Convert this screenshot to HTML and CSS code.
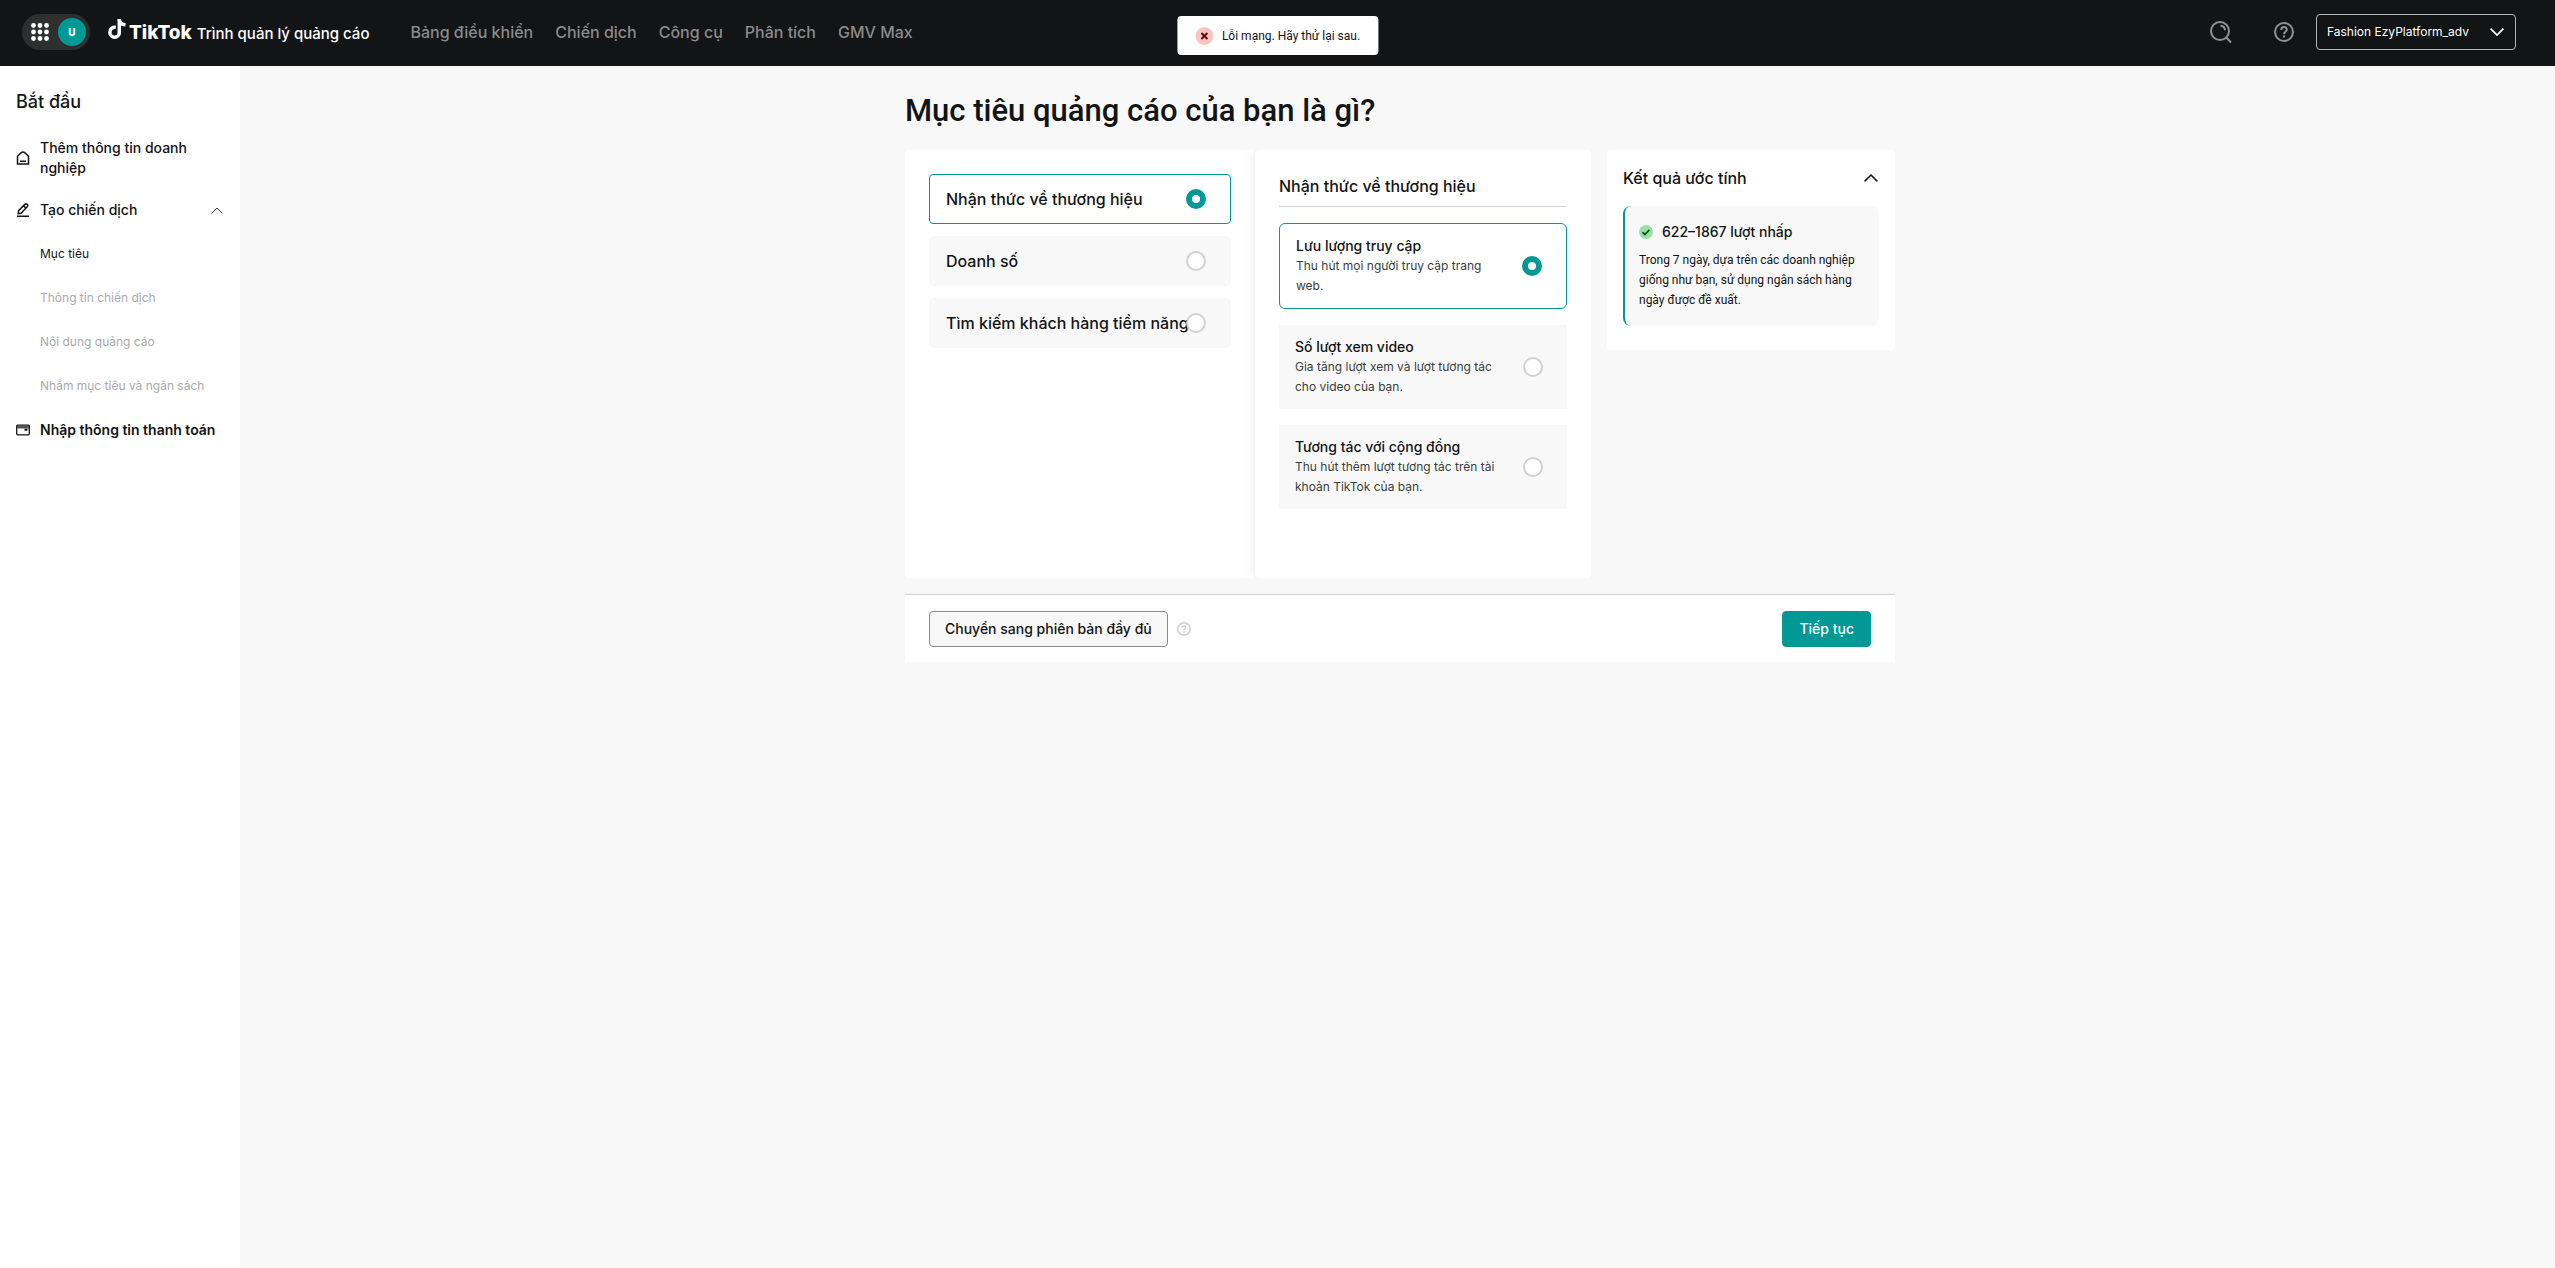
FILE: index.html
```html
<!DOCTYPE html>
<html lang="vi">
<head>
<meta charset="utf-8">
<meta name="viewport" content="width=device-width, initial-scale=1">
<title>TikTok Trình quản lý quảng cáo</title>
<link rel="stylesheet" href="styles.css">
</head>
<body>
<header class="topbar">
  <div class="switcher">
    <button class="switcher-apps" type="button" aria-label="Ứng dụng">
      <svg width="18" height="18" viewBox="0 0 18 18" fill="#fff"><circle cx="2.5" cy="2.5" r="2.4"/><circle cx="9" cy="2.5" r="2.4"/><circle cx="15.5" cy="2.5" r="2.4"/><circle cx="2.5" cy="9" r="2.4"/><circle cx="9" cy="9" r="2.4"/><circle cx="15.5" cy="9" r="2.4"/><circle cx="2.5" cy="15.5" r="2.4"/><circle cx="9" cy="15.5" r="2.4"/><circle cx="15.5" cy="15.5" r="2.4"/></svg>
    </button>
    <button class="avatar" type="button">U</button>
  </div>
  <a class="brand" href="#">
    <svg class="brand-note" width="18" height="20" viewBox="0 0 18 20" fill="none" stroke="#fff" stroke-width="3.5"><path d="M7.8 8.4C4.400 8 1.900 10 1.900 13.200c0 3 2.100 5 4.700 5 2.700 0 4.700-2 4.700-4.800V0"/><path d="M11.200 0c.3 3.500 2.500 5.600 6.300 5.800"/></svg>
    <span class="brand-name">TikTok</span>
    <span class="brand-product">Trình quản lý quảng cáo</span>
  </a>
  <nav class="main-nav">
    <a href="#">Bảng điều khiển</a>
    <a href="#">Chiến dịch</a>
    <a href="#">Công cụ</a>
    <a href="#">Phân tích</a>
    <a href="#">GMV Max</a>
  </nav>
  <div class="tools">
    <button class="icon-button" type="button" aria-label="Tìm kiếm">
      <svg width="22" height="23" viewBox="0 0 22 23" fill="none" stroke="#919293" stroke-width="2"><circle cx="10" cy="10" r="9"/><path d="M16.300 16.500l4.700 5M10.500 4.800c2.600.1 4.400 1.900 4.500 4.500"/></svg>
    </button>
    <button class="icon-button" type="button" aria-label="Trợ giúp">
      <svg width="20" height="20" viewBox="0 0 20 20" fill="none" stroke="#919293" stroke-width="2"><circle cx="10" cy="10" r="9"/><path d="M7.200 7.900c0-1.700 1.200-2.800 2.800-2.800s2.800 1 2.800 2.500c0 2.100-2.800 2.200-2.800 4.600M10 13.500v1.900"/></svg>
    </button>
    <div class="account">
      <select class="account-select" aria-label="Tài khoản"><option>Fashion EzyPlatform_adv</option></select>
      <svg class="account-arrow" width="14" height="8" viewBox="0 0 14 8" fill="none" stroke="#fff" stroke-width="1.700"><path d="M.6.6L7 7 13.400.6"/></svg>
    </div>
  </div>
  <div class="toast" role="alert">
    <svg width="18" height="18" viewBox="0 0 18 18"><circle cx="9" cy="9" r="9" fill="#ffc2bd"/><path d="M6 6l6 6M12 6l-6 6" stroke="#5c0a10" stroke-width="2"/></svg>
    <span>Lỗi mạng. Hãy thử lại sau.</span>
  </div>
</header>

<div class="page">
  <aside class="sidebar">
    <h2 class="sidebar-title">Bắt đầu</h2>
    <a class="step step-first" href="#">
      <svg width="14" height="14" viewBox="0 0 14 14" fill="none" stroke="#121415" stroke-width="1.500"><path d="M1.500 13V5.300L5.500 1.400q1.500-1 3 0l4 3.900V13zM4 10.300h6"/></svg>
      <span>Thêm thông tin doanh nghiệp</span>
    </a>
    <a class="step" href="#">
      <svg width="14" height="14" viewBox="0 0 14 14" fill="none" stroke="#121415" stroke-width="1.500"><path d="M2.200 10.600l.4-3L8.800 1.400q1.200-1 2.400 0t0 2.400L5 10.200zM7.600 2.800l2.300 2.300M1 13.300h12"/></svg>
      <span>Tạo chiến dịch</span>
      <svg class="step-arrow" width="12" height="7" viewBox="0 0 12 7" fill="none" stroke="#3b3d3e"><path d="M.5 6.500L6 1l5.500 5.500"/></svg>
    </a>
    <a class="substep substep-current" href="#">Mục tiêu</a>
    <a class="substep" href="#">Thông tin chiến dịch</a>
    <a class="substep" href="#">Nội dung quảng cáo</a>
    <a class="substep" href="#">Nhắm mục tiêu và ngân sách</a>
    <a class="step step-strong" href="#">
      <svg width="14" height="12" viewBox="0 0 14 12" fill="none" stroke="#121415" stroke-width="1.300"><rect x=".7" y="1.200" width="12.600" height="9.600" rx="1"/><path d="M1 2.600h12M1 3.900h12" stroke="#555"/><path d="M8.500 5.700h3" stroke-width="2"/></svg>
      <span>Nhập thông tin thanh toán</span>
    </a>
  </aside>

  <main class="main">
    <form class="wizard">
      <h1 class="title">Mục tiêu quảng cáo của bạn là gì?</h1>
      <div class="columns">
        <section class="card goals">
          <label class="goal"><span>Nhận thức về thương hiệu</span><input class="radio" type="radio" name="goal" checked></label>
          <label class="goal"><span>Doanh số</span><input class="radio" type="radio" name="goal"></label>
          <label class="goal"><span>Tìm kiếm khách hàng tiềm năng</span><input class="radio" type="radio" name="goal"></label>
        </section>
        <section class="card objectives">
          <h2 class="objectives-title">Nhận thức về thương hiệu</h2>
          <label class="objective"><span class="objective-text"><strong>Lưu lượng truy cập</strong><span>Thu hút mọi người truy cập trang web.</span></span><input class="radio" type="radio" name="objective" checked></label>
          <label class="objective"><span class="objective-text"><strong>Số lượt xem video</strong><span>Gia tăng lượt xem và lượt tương tác cho video của bạn.</span></span><input class="radio" type="radio" name="objective"></label>
          <label class="objective"><span class="objective-text"><strong>Tương tác với cộng đồng</strong><span>Thu hút thêm lượt tương tác trên tài khoản TikTok của bạn.</span></span><input class="radio" type="radio" name="objective"></label>
        </section>
        <section class="card estimate">
          <div class="estimate-head">
            <h2>Kết quả ước tính</h2>
            <button class="icon-button" type="button" aria-label="Thu gọn"><svg width="14" height="8" viewBox="0 0 14 8" fill="none" stroke="#121415" stroke-width="1.500"><path d="M.6 7.400L7 1l6.400 6.400"/></svg></button>
          </div>
          <div class="estimate-box">
            <h3><svg width="14" height="14" viewBox="0 0 14 14"><circle cx="7" cy="7" r="7" fill="#95e2a1"/><path d="M3.500 7.200l2.400 2.300 4.500-4.800" fill="none" stroke="#0b3a20" stroke-width="1.600"/></svg><span>622–1867 lượt nhấp</span></h3>
            <p>Trong 7 ngày, dựa trên các doanh nghiệp giống như bạn, sử dụng ngân sách hàng ngày được đề xuất.</p>
          </div>
        </section>
      </div>
      <footer class="actions">
        <button class="button" type="button">Chuyển sang phiên bản đầy đủ</button>
        <button class="icon-button" type="button" aria-label="Thông tin thêm">
          <svg width="14" height="14" viewBox="0 0 14 14" fill="none" stroke="#d0d1d1" stroke-width="1.500"><circle cx="7" cy="7" r="6.200"/><path d="M5.200 5.600c0-1.100.8-1.700 1.800-1.700s1.800.6 1.800 1.600c0 1.300-1.800 1.300-1.800 2.700M7 9.200v1.300"/></svg>
        </button>
        <button class="button button-primary" type="submit">Tiếp tục</button>
      </footer>
    </form>
  </main>
</div>
</body>
</html>
```
FILE: styles.css
```css
:root {
  --ink: #121415;
  --teal: #009995;
  --grey: #f8f8f8;
  --line: #d0d1d1;
  --narrow: Roboto, "Liberation Sans", sans-serif;
}

* { box-sizing: border-box; }

body {
  margin: 0;
  min-height: 100vh;
  display: flex;
  flex-direction: column;
  background: var(--grey);
  color: var(--ink);
  font: 400 12px/20px Inter, "Noto Sans", sans-serif;
}

h1, h2, h3, p { margin: 0; }
a { color: inherit; text-decoration: none; }
button, select { font: inherit; }
svg { display: block; flex: none; }

/* Top bar */
.topbar {
  position: relative;
  display: flex;
  align-items: center;
  height: 66px;
  padding: 0 39px 2px 22px;
  background: var(--ink);
  color: #fff;
}
.switcher {
  display: flex;
  align-items: center;
  gap: 9px;
  padding: 4px 4px 4px 9px;
  border-radius: 18px;
  background: #2e3030;
}
.switcher-apps, .icon-button {
  padding: 0;
  border: 0;
  background: none;
  cursor: pointer;
}
.avatar {
  width: 28px;
  height: 28px;
  padding: 0;
  border: 0;
  border-radius: 50%;
  background: var(--teal);
  color: #fff;
  font-size: 10px;
  font-weight: 800;
}
.brand {
  display: flex;
  align-items: baseline;
  margin-left: 18px;
}
.brand-note { margin-right: 3px; }
.brand-name {
  margin-right: 5px;
  font-size: 19px;
  font-weight: 800;
  line-height: 24px;
}
.brand-product {
  font-size: 15px;
  font-weight: 500;
}
.main-nav {
  display: flex;
  gap: 22px;
  margin-left: 41px;
  color: #8a8b8c;
  font-size: 16px;
  font-weight: 500;
}
.tools {
  display: flex;
  align-items: center;
  margin-left: auto;
}
.tools .icon-button { margin-right: 42px; }
.tools .icon-button + .icon-button { margin-right: 22px; }
.account { position: relative; }
.account-select {
  width: 200px;
  height: 36px;
  padding: 0 36px 0 10px;
  border: 1px solid #b4b5b5;
  border-radius: 4px;
  appearance: none;
  background: transparent;
  color: #fff;
}
.account-arrow {
  position: absolute;
  right: 12px;
  top: 14px;
  pointer-events: none;
}
.toast {
  position: absolute;
  left: 50%;
  top: 16px;
  display: flex;
  align-items: center;
  gap: 9px;
  height: 39px;
  padding: 0 18px;
  border-radius: 4px;
  transform: translateX(-50%);
  background: #fff;
  color: var(--ink);
  font-family: var(--narrow);
}

/* Side navigation */
.page {
  display: flex;
  flex: 1;
}
.sidebar {
  flex: none;
  width: 240px;
  padding: 24px 16px;
  background: #fff;
}
.sidebar-title {
  margin-bottom: 14px;
  font-size: 18px;
  font-weight: 500;
  line-height: 24px;
}
.step, .substep {
  display: flex;
  align-items: center;
  padding: 12px 0;
}
.step {
  gap: 10px;
  font-size: 14px;
  font-weight: 500;
}
.step-first { padding: 10px 0; }
.step-strong { font-weight: 600; }
.step-arrow { margin: 0 1px 0 auto; }
.substep {
  padding-left: 24px;
  color: #a9aaab;
}
.substep-current { color: var(--ink); }

/* Campaign objective form */
.main {
  flex: 1;
  padding: 25px 0 24px 5px;
}
.wizard {
  max-width: 990px;
  margin: 0 auto;
}
.title {
  margin-bottom: 19px;
  font: 500 31px/40px var(--narrow);
}
.columns {
  display: grid;
  grid-template-columns: 350px 336px 288px;
  column-gap: 0;
  align-items: start;
}
.card {
  border-radius: 4px;
  background: #fff;
}
.goals, .objectives {
  align-self: stretch;
  min-height: 428px;
  padding: 24px;
}
.goals {
  display: flex;
  flex-direction: column;
  gap: 12px;
}
.goal {
  display: flex;
  align-items: center;
  height: 50px;
  padding: 0 24px 0 16px;
  border: 1px solid var(--grey);
  border-radius: 4px;
  background: var(--grey);
  font-size: 16px;
  font-weight: 450;
}
.goal span {
  flex: 1;
  min-width: 0;
  white-space: nowrap;
}
.goal:has(:checked) {
  border-color: var(--teal);
  background: #fff;
}
.radio {
  flex: none;
  width: 20px;
  height: 20px;
  margin: 0;
  border: 2px solid var(--line);
  border-radius: 50%;
  appearance: none;
  background: #fff;
}
.radio:checked { border: 6px solid var(--teal); }

.objectives {
  display: flex;
  flex-direction: column;
  gap: 16px;
  box-shadow: 0 0 12px rgba(0, 0, 0, 0.1);
  clip-path: inset(0 0 0 -12px);
}
.objectives-title {
  padding-bottom: 8px;
  border-bottom: 1px solid var(--line);
  font-size: 16px;
  font-weight: 500;
  line-height: 24px;
}
.objective {
  display: flex;
  align-items: center;
  justify-content: space-between;
  padding: 12px 24px 12px 16px;
  background: var(--grey);
}
.objective:has(:checked) {
  border: 1px solid var(--teal);
  border-radius: 6px;
  background: #fff;
}
.objective-text { width: 204px; }
.objective-text > * { display: block; }
.objective-text strong {
  font-size: 14px;
  font-weight: 500;
}
.objective-text span { color: #3b3d3e; }

.estimate {
  width: 288px;
  margin-left: 16px;
  padding: 16px 16px 24px;
}
.estimate-head {
  display: flex;
  align-items: center;
  justify-content: space-between;
  padding: 0 1px 16px 0;
}
.estimate-head h2 {
  font-size: 16px;
  font-weight: 500;
  line-height: 24px;
}
.estimate-box {
  padding: 16px 12px 16px 14px;
  border-left: 2px solid var(--teal);
  border-radius: 8px;
  background: var(--grey);
}
.estimate-box h3 {
  display: flex;
  align-items: center;
  gap: 9px;
  margin-bottom: 8px;
  font-size: 14px;
  font-weight: 500;
}
.estimate-box p { font-family: var(--narrow); }

.actions {
  display: flex;
  align-items: center;
  gap: 9px;
  margin-top: 16px;
  padding: 16px 24px 15px;
  border-top: 1px solid var(--line);
  background: #fff;
}
.button {
  height: 36px;
  padding: 0 15px;
  border: 1px solid #8a8b8c;
  border-radius: 4px;
  background: var(--grey);
  color: var(--ink);
  font-size: 14px;
  font-weight: 500;
}
.button-primary {
  margin-left: auto;
  padding: 0 16px;
  border-color: var(--teal);
  background: var(--teal);
  color: #fff;
  font-weight: 500;
}
```
